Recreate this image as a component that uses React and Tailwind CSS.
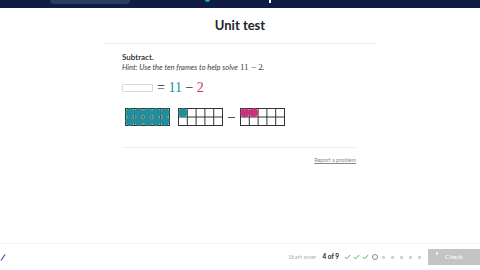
import React from "react";

const sans = { fontFamily: "Lato, 'Open Sans', sans-serif" };
const serif = { fontFamily: "'Liberation Serif', 'DejaVu Serif', serif" };

function TenFrame({ filled = 0, color = "#1f8f9c" }) {
  const W = 45;
  const H = 18;
  const cw = (W - 1) / 5;
  const ch = (H - 1) / 2;
  const dots = [];
  for (let i = 0; i < filled; i++) {
    const c = i % 5;
    const r = Math.floor(i / 5);
    dots.push(
      <circle key={i} cx={0.5 + cw * c + cw / 2} cy={0.5 + ch * r + ch / 2} r={4.6} fill={color} />
    );
  }
  const lines = [];
  for (let c = 1; c < 5; c++) {
    lines.push(<line key={"v" + c} x1={0.5 + cw * c} y1={0} x2={0.5 + cw * c} y2={H} stroke="#333" strokeWidth="1" />);
  }
  lines.push(<line key="h" x1={0} y1={0.5 + ch} x2={W} y2={0.5 + ch} stroke="#333" strokeWidth="1" />);
  return (
    <svg width={W} height={H} viewBox={`0 0 ${W} ${H}`} className="block">
      <rect x="0.5" y="0.5" width={W - 1} height={H - 1} fill="white" stroke="#333" strokeWidth="1" />
      {lines}
      {dots}
    </svg>
  );
}

function Check() {
  return (
    <svg width="7" height="6" viewBox="0 0 7 6">
      <path d="M0.8 3 L2.6 4.8 L6.2 1" fill="none" stroke="#4caf50" strokeWidth="1" />
    </svg>
  );
}

export default function App() {
  return (
    <div className="w-[480px] h-[270px] bg-white flex flex-col overflow-hidden" style={sans}>
      <div className="h-[8px] bg-[#0f1d45] relative shrink-0">
        <div className="absolute left-[50px] top-[-6px] w-[80px] h-[10px] rounded-sm bg-[#2a3a63]" />
        <div className="absolute left-[205px] top-[-3px] w-[5px] h-[5px] rounded-full bg-[#17b3a6]" />
        <div className="absolute left-[269px] top-[0px] w-[2px] h-[3px] bg-white" />
      </div>
      <div className="h-[35px] flex items-center justify-center shrink-0">
        <span className="text-[13px] font-bold text-[#21242c] leading-none">Unit test</span>
      </div>
      <div className="mx-[104px] border-t border-[#eeeeee] shrink-0" />
      <div className="px-[122px] pt-[8px] flex flex-col shrink-0">
        <div className="text-[8px] font-semibold text-[#21242c] leading-[10px]">Subtract.</div>
        <div className="text-[7.5px] italic text-[#3b3e40] leading-[10px] flex items-baseline gap-[2px] whitespace-nowrap">
          <span>Hint: Use the ten frames to help solve</span>
          <span className="not-italic text-[9px]" style={serif}>11 − 2</span>
          <span className="-ml-[2px]">.</span>
        </div>
        <div className="flex items-center mt-[8px] h-[14px]">
          <div className="w-[31px] h-[8px] border border-[#d8d8d8] rounded-[1px]" />
          <span className="ml-[4px] text-[14px] leading-none whitespace-nowrap" style={serif}>
            <span className="text-[#21242c]">=</span>{" "}
            <span className="text-[#1f8f9c]">11</span>
            <span className="text-[#21242c]"> − </span>
            <span className="text-[#ca337c]">2</span>
          </span>
        </div>
        <div className="flex items-center mt-[13px] ml-[3px]">
          <TenFrame filled={10} />
          <div className="ml-[8px]">
            <TenFrame filled={1} />
          </div>
          <div className="mx-[5px] w-[7px] h-[1px] bg-[#555]" />
          <TenFrame filled={2} color="#ca337c" />
        </div>
        <div className="mt-[21px] border-t border-[#eeeeee] mr-[2px]" />
        <div className="flex justify-end mt-[10px] mr-[2px]">
          <span className="text-[5.5px] text-[#888] underline leading-none">Report a problem</span>
        </div>
      </div>
      <div className="flex-1" />
      <div className="h-[27px] border-t border-[#f2f2f2] flex items-center shrink-0 relative">
        <div className="absolute left-[0px] top-[10px]">
          <svg width="6" height="8" viewBox="0 0 6 8">
            <path d="M5 0.5 L1 6.5" stroke="#3b5fc6" strokeWidth="1.3" />
          </svg>
        </div>
        <div className="flex-1" />
        <span className="text-[6.5px] text-[#b0b0b0] mr-[6px]">Start over</span>
        <span className="text-[6.5px] font-bold text-[#21242c] mr-[4px]">4 of 9</span>
        <div className="flex items-center mr-[4px]">
          {[0, 1, 2].map((i) => (
            <div key={i} className="w-[9px] flex justify-center">
              <Check />
            </div>
          ))}
          <div className="w-[9px] flex justify-center">
            <div className="w-[6px] h-[6px] rounded-full border border-[#888]" />
          </div>
          {[0, 1, 2, 3, 4].map((i) => (
            <div key={i} className="w-[9px] flex justify-center">
              <div className="w-[3px] h-[3px] rounded-full border border-[#aaa]" />
            </div>
          ))}
        </div>
        <div className="w-[52px] h-[16px] bg-[#c4c4c4] flex items-center justify-center relative">
          <div className="absolute left-[8px] top-[3px] w-[2px] h-[3px] bg-white opacity-70" />
          <span className="text-[6.5px] text-white">Check</span>
        </div>
      </div>
    </div>
  );
}
